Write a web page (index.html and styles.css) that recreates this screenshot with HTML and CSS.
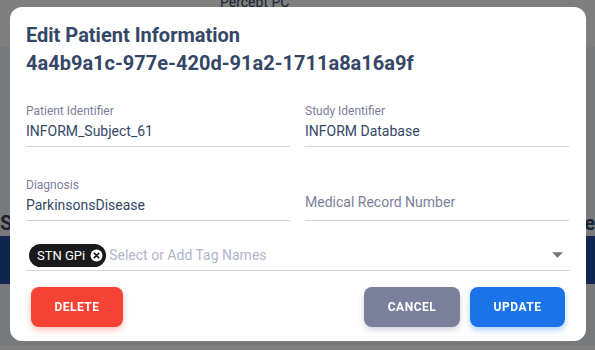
FILE: index.html
```html
<!DOCTYPE html>
<html lang="en">
<head>
  <meta charset="UTF-8">
  <title>Edit Patient Information</title>
  <link rel="stylesheet" href="styles.css">
</head>
<body>
  <!-- underlying page, dimmed by the backdrop -->
  <div class="page">
    <div class="page-top">
      <span class="page-device">Percept PC</span>
    </div>
    <div class="page-band">
      <span class="page-heading-left">S</span>
      <span class="page-heading-right">re</span>
    </div>
    <div class="page-bar"></div>
  </div>

  <div class="backdrop"></div>

  <div class="modal">
    <div class="modal-header">
      <h2>Edit Patient Information</h2>
      <h2>4a4b9a1c-977e-420d-91a2-1711a8a16a9f</h2>
    </div>

    <div class="form-grid">
      <div class="field">
        <label>Patient Identifier</label>
        <div class="value">INFORM_Subject_61</div>
      </div>
      <div class="field">
        <label>Study Identifier</label>
        <div class="value">INFORM Database</div>
      </div>
      <div class="field">
        <label>Diagnosis</label>
        <div class="value">ParkinsonsDisease</div>
      </div>
      <div class="field">
        <div class="value placeholder">Medical Record Number</div>
      </div>
    </div>

    <div class="tags">
      <span class="chip">STN GPi
        <svg class="chip-close" viewBox="0 0 24 24" width="13" height="13">
          <circle cx="12" cy="12" r="11" fill="#fff"/>
          <path d="M8 8l8 8M16 8l-8 8" stroke="#1a1a1a" stroke-width="3" stroke-linecap="round"/>
        </svg>
      </span>
      <span class="tag-placeholder">Select or Add Tag Names</span>
      <svg class="caret" viewBox="0 0 10 5" width="11" height="6">
        <path d="M0 0h10L5 5z" fill="#757575"/>
      </svg>
    </div>

    <div class="actions">
      <button class="btn btn-delete">Delete</button>
      <div class="actions-right">
        <button class="btn btn-cancel">Cancel</button>
        <button class="btn btn-update">Update</button>
      </div>
    </div>
  </div>
</body>
</html>
```

FILE: styles.css
```css
html, body {
  height: 100%;
  margin: 0;
  padding: 0;
  font-family: Roboto, "Liberation Sans", sans-serif;
  overflow: hidden;
}

.page {
  height: 100%;
  background-color: #f0f2f5;
}

.page-top {
  height: 52px;
  background-color: #fff;
  padding-left: 220px;
}

.page-device {
  display: block;
  font-size: 14px;
  line-height: 14px;
  color: #344767;
  margin-top: -5px;
}

.page-band {
  display: flex;
  justify-content: space-between;
  margin-top: 164px;
  font-size: 20px;
  font-weight: bold;
  color: #344767;
}

.page-bar {
  height: 48px;
  margin-top: 1px;
  background-color: #1e4fa0;
}

.backdrop {
  position: fixed;
  inset: 0;
  background-color: rgba(0, 0, 0, 0.5);
}

.modal {
  position: fixed;
  left: 10px;
  top: 7px;
  width: 576px;
  height: 334px;
  box-sizing: border-box;
  padding: 14px 16px 0 16px;
  background-color: #fff;
  border-radius: 12px;
}

.modal-header h2 {
  margin: 0;
  font-size: 20px;
  line-height: 28px;
  font-weight: bold;
  color: #344767;
}

.form-grid {
  display: grid;
  grid-template-columns: 264px 264px;
  column-gap: 15px;
  row-gap: 26px;
  margin-top: 22px;
}

.field {
  height: 47px;
  display: flex;
  flex-direction: column;
  justify-content: flex-end;
  border-bottom: 1px solid #d2d6da;
}

.field label {
  font-size: 12px;
  line-height: 16px;
  margin-bottom: 2px;
  color: #7b809a;
}

.value {
  font-size: 14px;
  line-height: 20px;
  color: #344767;
  padding-bottom: 5px;
}

.value.placeholder {
  color: #7b809a;
  padding-bottom: 8px;
}

.tags {
  display: flex;
  align-items: center;
  gap: 3px;
  margin-top: 19px;
  padding: 0 7px 0 3px;
  height: 30px;
  border-bottom: 1px solid #d2d6da;
}

.chip {
  display: flex;
  align-items: center;
  gap: 5px;
  height: 23px;
  padding: 0 3px 0 8px;
  background-color: #1a1a1a;
  border-radius: 12px;
  color: #fff;
  font-size: 13px;
}

.tag-placeholder {
  flex: 1;
  font-size: 14px;
  color: #b0b7c9;
}

.actions {
  display: flex;
  justify-content: space-between;
  margin-top: 16px;
  padding: 0 5px;
}

.actions-right {
  display: flex;
  gap: 10px;
}

.btn {
  height: 40px;
  border: none;
  border-radius: 8px;
  color: #fff;
  font-family: Roboto, "Liberation Sans", sans-serif;
  font-size: 12px;
  font-weight: bold;
  letter-spacing: 0.5px;
  text-transform: uppercase;
  cursor: pointer;
}

.btn-delete {
  width: 92px;
  background-color: #f44335;
  box-shadow: 0 3px 6px rgba(244, 67, 53, 0.35);
}

.btn-cancel {
  width: 96px;
  background-color: #7b809a;
  box-shadow: 0 3px 6px rgba(123, 128, 154, 0.35);
}

.btn-update {
  width: 95px;
  background-color: #1a73e8;
  box-shadow: 0 3px 6px rgba(26, 115, 232, 0.35);
}
```
